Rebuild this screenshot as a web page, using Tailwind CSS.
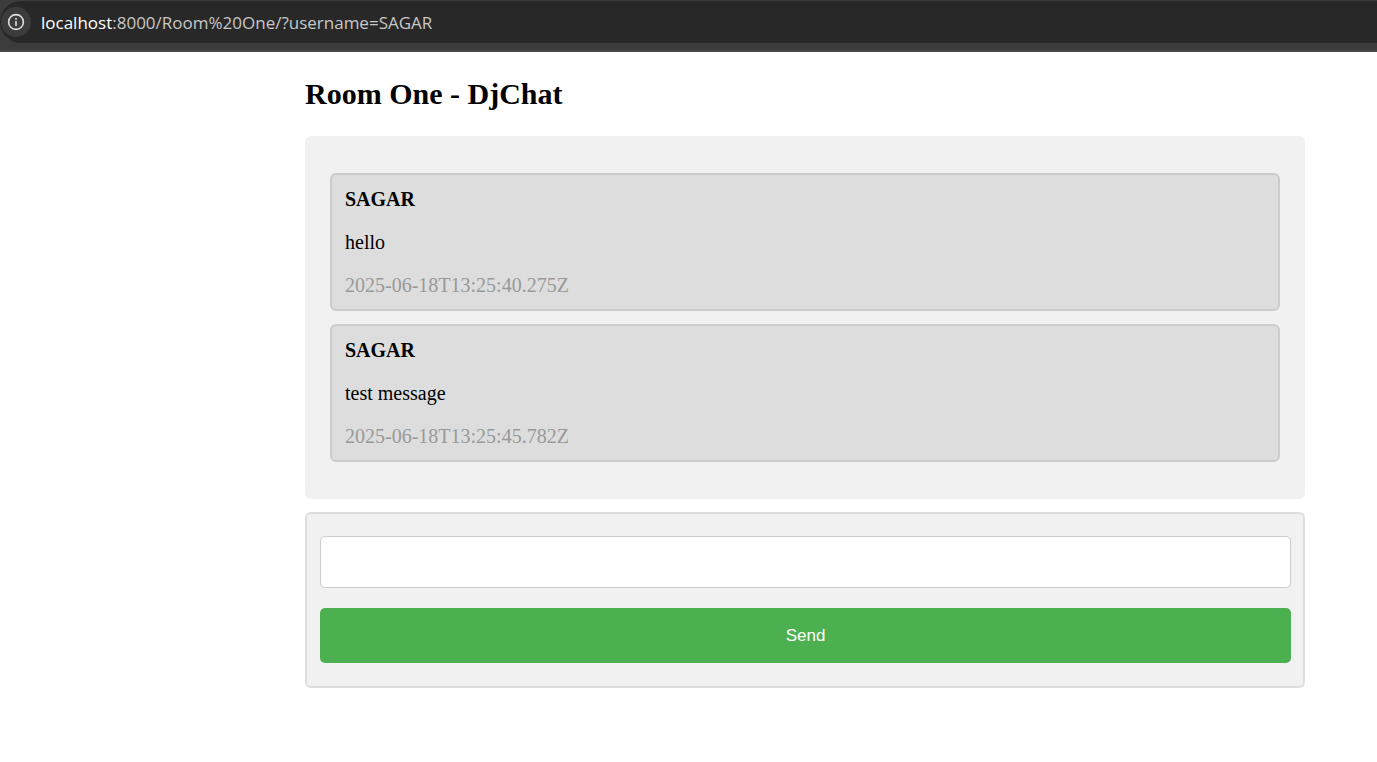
<!DOCTYPE html>
<html lang="en">
<head>
<meta charset="utf-8">
<meta name="viewport" content="width=device-width, initial-scale=1">
<title>Room One - DjChat</title>
<script src="https://cdn.jsdelivr.net/npm/@tailwindcss/browser@4"></script>
</head>
<body class="bg-white text-black font-['Liberation_Serif','Times_New_Roman',serif] text-[20px] leading-[23px]">
  <header class="bg-[#3c3c3c] border-b-2 border-[#484848] pt-px pb-[7px]">
    <div class="flex items-center h-[42px] bg-[#282828] rounded-l-full pl-px gap-[10px]">
      <button type="button" aria-label="View site information" class="grid place-items-center size-[30px] rounded-full bg-[#3c3c3c]">
        <svg class="size-[18px]" viewBox="0 0 18 18" fill="none" stroke="#dedede" stroke-width="1.6">
          <circle cx="9" cy="9" r="7.4"/>
          <path d="M9 8v5M9 5v1.7"/>
        </svg>
      </button>
      <p class="font-['Segoe_UI','Open_Sans',sans-serif] text-[17px] leading-6 pt-px text-[#c7c7c7] whitespace-nowrap"><span class="text-white">localhost</span>:8000/Room%20One/?username=SAGAR</p>
    </div>
  </header>

  <main class="max-w-[1000px] ml-auto mr-[72px] pt-[25px] pb-8">
    <h1 class="text-[30px] leading-[34px] font-bold">Room One - DjChat</h1>

    <section aria-label="Messages" class="mt-[25px] flex flex-col gap-[13px] rounded-md bg-[#f1f1f1] px-[25px] py-[37px]">
      <article class="flex flex-col gap-5 rounded-md border-2 border-[#cccccc] bg-[#dddddd] px-[13px] pt-[13px] pb-3">
        <b>SAGAR</b>
        <p>hello</p>
        <time class="text-[#999999]">2025-06-18T13:25:40.275Z</time>
      </article>
      <article class="flex flex-col gap-5 rounded-md border-2 border-[#cccccc] bg-[#dddddd] px-[13px] pt-[13px] pb-3">
        <b>SAGAR</b>
        <p>test message</p>
        <time class="text-[#999999]">2025-06-18T13:25:45.782Z</time>
      </article>
    </section>

    <form class="mt-[13px] flex flex-col gap-5 rounded-md border-2 border-[#dddddd] bg-[#f1f1f1] pl-[13px] pr-3 pt-[22px] pb-[23px]" onsubmit="return false">
      <input type="text" aria-label="Message" class="h-[52px] w-full rounded-[5px] border border-[#cccccc] bg-white px-[15px] font-['Liberation_Sans',Arial,sans-serif] text-[17px] outline-none">
      <button type="submit" class="h-[55px] w-full rounded-[5px] bg-[#4caf50] text-white font-['Liberation_Sans',Arial,sans-serif] text-[17px]">Send</button>
    </form>
  </main>
</body>
</html>
